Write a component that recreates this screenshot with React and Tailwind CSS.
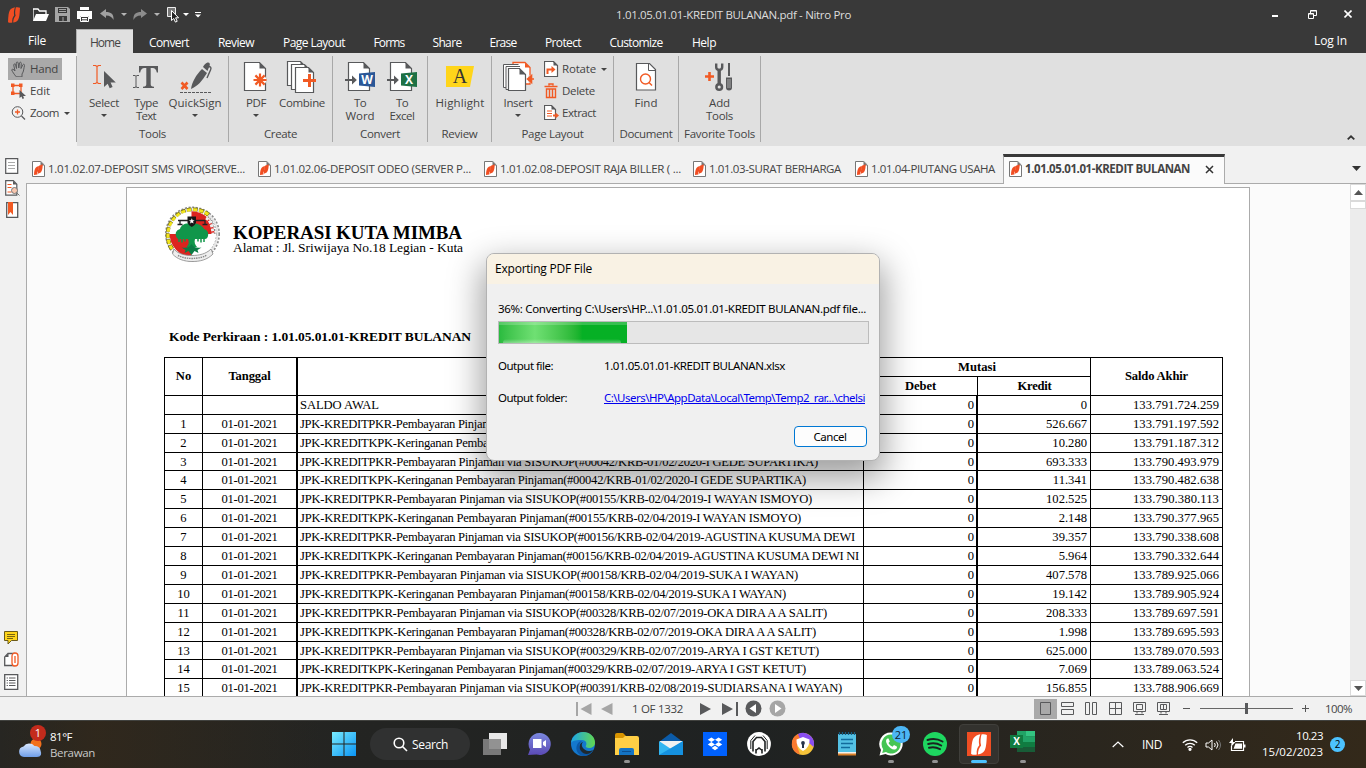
import { useLayoutEffect, useRef, useState } from "react";

/* Single line of text whose tracking is tuned so that it fills `w` pixels. */
function Fit({ w, className = "", children }) {
  const ref = useRef(null);
  const [spacing, setSpacing] = useState(0);
  useLayoutEffect(() => {
    const natural = ref.current.getBoundingClientRect().width;
    setSpacing((w - natural) / String(children).length);
  }, [w, children]);
  return (
    <span ref={ref} className={"inline-block whitespace-pre " + className} style={{ letterSpacing: spacing }}>
      {children}
    </span>
  );
}

const Caret = ({ className = "" }) => (
  <svg className={"h-[3px] w-[6px] " + className} viewBox="0 0 6 3" fill="currentColor"><path d="M0 0h6L3 3z" /></svg>
);

const NitroMark = ({ className }) => (
  <svg viewBox="0 0 12 16" className={className} fill="currentColor">
    <path d="M0 15.200C.3 9 .6 5 2 3 3 1.600 5 .6 7 .2 6 3 5.600 5.500 6.200 8.600 4.800 10 3.900 12.500 4.300 15.600 3 16 1.200 15.900 0 15.200z" />
    <path d="M12 .8C11.700 7 11.400 11 10 13 9 14.400 7.500 15.200 5.200 15.600 5.200 13 6 10.600 7.600 8.800 6.800 6 7.200 3 7.900.3 9.400 0 11 .1 12 .8z" />
  </svg>
);

const PdfIcon = () => (
  <svg className="h-4 w-[13px] shrink-0" viewBox="0 0 13 16" fill="none">
    <path d="M.5.5h8.300l3.700 3.700v11.300H.5z" fill="#fff" stroke="#777" />
    <path d="M8.500.5v4h4z" fill="#777" />
    <path d="M2 14c.1-4 .6-7 2.800-8.300L6.800 5v4.500L5.400 11v2.500zM10.700 3.300c0 3-.4 6.700-2 8.200L5.900 12.800V10l1-1V4.800z" fill="#f04e23" />
  </svg>
);

const S = "#58595b";
const O = "#f15a24";

const Sheet = ({ x = 0, y = 0, w = 21, h = 28, c = S, fill = "#fff", fold = 6 }) => (
  <g transform={`translate(${x} ${y})`}>
    <path d={`M.5.5h${w - fold}l${fold} ${fold}v${h - fold}h-${w}z`} fill={fill} stroke={c} strokeWidth="1.2" />
    <path d={`M${w - fold + 0.5}.5v${fold}h${fold}z`} fill={c} />
  </g>
);

const Ribbon = {
  select: (
    <svg width="34" height="36" viewBox="0 0 34 36" fill="none">
      <path d="M6 5.500h2.500l1.500 1 1.500-1H14M10 6.500v16M6 23.500h2.500l1.500-1 1.500 1H14" stroke={O} strokeWidth="1.200" />
      <path d="M17 11v16l3.700-3.300 2 4.500 2.900-1.300-2-4.400H28.800z" fill={S} />
    </svg>
  ),
  type: (
    <svg width="34" height="36" viewBox="0 0 34 36" fill="none">
      <path d="M4 15.500h2l1 .8 1-.8h2M7 16.300v11M4 27.500h2l1-.8 1 .8h2" stroke={S} />
      <path d="M10 6h19v6.500h-1.200c-.6-3-1.800-4.500-4.300-4.500h-1.800v16c0 2 .7 2.500 3.300 2.700V28H14v-1.300c2.600-.2 3.300-.7 3.300-2.700V8h-1.800c-2.500 0-3.700 1.500-4.300 4.500H10z" fill={S} />
    </svg>
  ),
  sign: (
    <svg width="36" height="36" viewBox="0 0 36 36" fill="none">
      <path d="M14 29C15 22 19 15 25 9l5 4c-5 8-9 13-16 16zM26 7c1-2 2.500-4 4.500-4.500S33.500 4 32.500 6L30.500 11z" fill={S} />
      <path d="M31 6.500c3 0 3.500 1 2.500 3.500l-3.500 8" stroke={S} strokeWidth="1.400" />
      <path d="m4.500 22.500 6 6.500m0-6.500-6 6.500" stroke={O} strokeWidth="2.600" />
      <path d="M3 32.500h32" stroke={S} strokeDasharray="3 1" />
    </svg>
  ),
  pdf: (
    <svg width="32" height="36" viewBox="0 0 32 36" fill="none">
      <Sheet x={4} y={2} />
      <path d="M19 13v14M12 20h14M14.200 15.200l9.600 9.600m0-9.600-9.600 9.600" stroke="#fff" strokeWidth="5" />
      <path d="M20 13.500v13M13.500 20h13M15.400 15.400l9.200 9.200m0-9.200-9.200 9.200" stroke={O} strokeWidth="2.200" />
    </svg>
  ),
  combine: (
    <svg width="34" height="36" viewBox="0 0 34 36" fill="none">
      <Sheet x={2} y={1} w={18} h={24} fold={5} /><Sheet x={6} y={4} w={18} h={25} fold={5} /><Sheet x={10} y={7} w={18} h={25} fold={5} />
      <path d="M24.500 14v13M18 20.500h13" stroke={O} strokeWidth="3" />
    </svg>
  ),
  find: (
    <svg width="34" height="36" viewBox="0 0 34 36" fill="none">
      <path d="M7.500 3.500h13l6 6V30h-19z" fill="#fff" stroke={S} strokeWidth="1.200" /><path d="M19.500 3.500v7h7" stroke={S} />
      <circle cx="16.500" cy="19" r="5" stroke={O} strokeWidth="1.400" /><path d="m20 22.500 3 3" stroke={O} strokeWidth="1.400" />
    </svg>
  ),
  insert: (
    <svg width="34" height="36" viewBox="0 0 34 36" fill="none">
      <path d="M12 5V2.500h12l5 5V24h-5" fill="#fff" stroke={O} strokeWidth="1.300" /><path d="M24 2.500v5h5z" fill={O} />
      <path d="M5.500 27.500h-3v-23h15" stroke={S} fill="#fff" /><path d="M8 29.500H5v-23h14" stroke={S} fill="#fff" />
      <Sheet x={7} y={8} w={17} h={22} fold={6} />
      <path d="M27 19h7" stroke="#e0e0e0" strokeWidth="7" /><path d="M27 19h6m-2.500-3.500L26.500 19l4 3.500z" stroke={O} strokeWidth="1.600" fill={O} />
    </svg>
  ),
  highlight: (
    <svg width="30" height="36" viewBox="0 0 30 36"><path d="M1 6h28l-4 21H1z" fill="#ffd51a" /></svg>
  ),
  tools: (
    <svg width="34" height="36" viewBox="0 0 34 36" fill="none">
      <path d="M6.500 12v9M2 16.500h9" stroke={O} strokeWidth="2.600" />
      <path d="M13.200 3.500v3.700q0 2.300 3 2.800 3-.5 3-2.800V3.500" stroke={S} strokeWidth="2.400" /><path d="M16.200 9v15" stroke={S} strokeWidth="3.400" />
      <circle cx="16.200" cy="27" r="2.800" stroke={S} strokeWidth="2.500" />
      <path d="M25 3h2v13h-2z" fill={S} /><path d="M23 17.500h6v10q0 3-3 3t-3-3z" fill={S} /><path d="M25 19v9M27 19v9" stroke="#e0e0e0" strokeWidth=".6" />
    </svg>
  ),
};

function OfficeIcon({ letter, color }) {
  return (
    <span className="relative block h-9 w-[34px]">
      <svg width="34" height="36" viewBox="0 0 34 36" fill="none">
        <Sheet x={5} y={2} />
        <path d="M2 20h8.500" stroke={S} strokeWidth="2" /><path d="M9 15.500 13.800 20 9 24.500z" fill={S} />
        <path d="M16 13.500 32 12v15l-16-1.500z" fill={color} />
      </svg>
      <span className="absolute left-[16px] top-[13px] w-4 text-center text-[12px] font-bold leading-[13px] text-white">{letter}</span>
    </span>
  );
}

function Big({ icon, lines, w, caret, lw }) {
  return (
    <div className="flex shrink-0 flex-col items-center" style={{ width: w }}>
      <div className="relative flex h-9 justify-center">{icon}</div>
      <div className="flex flex-col items-center leading-[13px]">
        {lines.map((l, i) => <Fit key={l} w={lw[i]}>{l}</Fit>)}
      </div>
      {caret && <Caret className="mt-[5px]" />}
    </div>
  );
}

function Group({ label, lw, className, children }) {
  return (
    <div className={"flex h-[86px] flex-col items-center border-r border-[#a8a8a8] " + className}>
      <div className="flex h-[71px] w-full pt-1">{children}</div>
      <Fit w={lw} className="leading-[14px]">{label}</Fit>
    </div>
  );
}

const menu = [
  ["Convert", "w-[72px]", 40], ["Review", "w-[62px]", 36], ["Page Layout", "w-[94px]", 62], ["Forms", "w-[56px]", 31],
  ["Share", "w-[60px]", 29], ["Erase", "w-[52px]", 27], ["Protect", "w-[68px]", 36], ["Customize", "w-[78px]", 53], ["Help", "w-[58px]", 24],
];

const docTabs = [
  ["1.01.02.07-DEPOSIT SMS VIRO(SERVE...", "w-[226px]", 197],
  ["1.01.02.06-DEPOSIT ODEO (SERVER P...", "w-[226px]", 197],
  ["1.01.02.08-DEPOSIT RAJA BILLER ( ...", "w-[209px]", 181],
  ["1.01.03-SURAT BERHARGA", "w-[162px]", 132],
  ["1.01.04-PIUTANG USAHA", "w-[154px]", 124],
];

const D = "01-01-2021";
const rows = [
  ["", "", "SALDO AWAL", "0", "0", "133.791.724.259"],
  ["1", D, "JPK-KREDITPKR-Pembayaran Pinjaman via SISUKOP(#00041/KRB-01/02/2020-I MADE SUARTA)", "0", "526.667", "133.791.197.592"],
  ["2", D, "JPK-KREDITKPK-Keringanan Pembayaran Pinjaman(#00041/KRB-01/02/2020-I MADE SUARTA)", "0", "10.280", "133.791.187.312"],
  ["3", D, "JPK-KREDITPKR-Pembayaran Pinjaman via SISUKOP(#00042/KRB-01/02/2020-I GEDE SUPARTIKA)", "0", "693.333", "133.790.493.979"],
  ["4", D, "JPK-KREDITKPK-Keringanan Pembayaran Pinjaman(#00042/KRB-01/02/2020-I GEDE SUPARTIKA)", "0", "11.341", "133.790.482.638"],
  ["5", D, "JPK-KREDITPKR-Pembayaran Pinjaman via SISUKOP(#00155/KRB-02/04/2019-I WAYAN ISMOYO)", "0", "102.525", "133.790.380.113"],
  ["6", D, "JPK-KREDITKPK-Keringanan Pembayaran Pinjaman(#00155/KRB-02/04/2019-I WAYAN ISMOYO)", "0", "2.148", "133.790.377.965"],
  ["7", D, "JPK-KREDITPKR-Pembayaran Pinjaman via SISUKOP(#00156/KRB-02/04/2019-AGUSTINA KUSUMA DEWI", "0", "39.357", "133.790.338.608"],
  ["8", D, "JPK-KREDITKPK-Keringanan Pembayaran Pinjaman(#00156/KRB-02/04/2019-AGUSTINA KUSUMA DEWI NI", "0", "5.964", "133.790.332.644"],
  ["9", D, "JPK-KREDITPKR-Pembayaran Pinjaman via SISUKOP(#00158/KRB-02/04/2019-SUKA I WAYAN)", "0", "407.578", "133.789.925.066"],
  ["10", D, "JPK-KREDITKPK-Keringanan Pembayaran Pinjaman(#00158/KRB-02/04/2019-SUKA I WAYAN)", "0", "19.142", "133.789.905.924"],
  ["11", D, "JPK-KREDITPKR-Pembayaran Pinjaman via SISUKOP(#00328/KRB-02/07/2019-OKA DIRA A A SALIT)", "0", "208.333", "133.789.697.591"],
  ["12", D, "JPK-KREDITKPK-Keringanan Pembayaran Pinjaman(#00328/KRB-02/07/2019-OKA DIRA A A SALIT)", "0", "1.998", "133.789.695.593"],
  ["13", D, "JPK-KREDITPKR-Pembayaran Pinjaman via SISUKOP(#00329/KRB-02/07/2019-ARYA I GST KETUT)", "0", "625.000", "133.789.070.593"],
  ["14", D, "JPK-KREDITKPK-Keringanan Pembayaran Pinjaman(#00329/KRB-02/07/2019-ARYA I GST KETUT)", "0", "7.069", "133.789.063.524"],
  ["15", D, "JPK-KREDITPKR-Pembayaran Pinjaman via SISUKOP(#00391/KRB-02/08/2019-SUDIARSANA I WAYAN)", "0", "156.855", "133.788.906.669"],
];
const rowWidths = [79, 500, 490, 518, 506, 512, 501, 555, 559, 498, 486, 527, 516, 519, 506, 542];

const CoopLogo = () => (
  <svg className="mt-px" width="60" height="58" viewBox="0 0 60 58" fill="none">
    <circle cx="28.500" cy="28" r="25.500" stroke="#8d8d8d" strokeWidth="4" strokeDasharray="2 1.500" />
    <circle cx="28.500" cy="28" r="25" stroke="#e6e6e6" strokeWidth="2" />
    <path d="M8 43A25.500 25.500 0 0 1 45 9" stroke="#756d12" strokeWidth="4.500" strokeDasharray="4.500 1.500" />
    <path d="M8 43A25.500 25.500 0 0 1 45 9" stroke="#f2e51c" strokeWidth="3" strokeDasharray="4 2" />
    <circle cx="28.500" cy="28" r="22.800" fill="#fff" />
    <path d="M27.500 5.200A22.800 22.800 0 0 1 50.500 28h-23zM27.500 50.800A22.800 22.800 0 0 1 5.700 28h21.800z" fill="#dc241f" />
    <path d="M12 30c-1-4 1-6 4-7 1-4 5-6 11-6s11 2 13 6c3 1 5 3 4 7-.5 2-1.500 3-3 3H31c-1 3 0 6 2 8H22.500c2-2 3-5 1.500-8H15c-1.500 0-2.500-1-3-3z" fill="#10964a" />
    <path d="M15 32v4M18 32v4.500M21 32v3.500M34 32v3.500M37 32v4.500M40 32v4" stroke="#10964a" strokeWidth="1.500" />
    <path d="M27.500 38c2 4 6 4 10 3.500l-4 2.500 1 3-4-2-3 4-3-4-4 2 1-3-4-2.500c4 .5 8 .5 10-3.500z" fill="#0c7d46" />
    <path d="M14 14.500h27M16 14v4M41 14v4M13.500 18.500h5M38.500 18.500h5" stroke="#222" strokeWidth="1.300" />
    <path d="M23.500 10.500h8.500v6q-1 3.500-4.200 4.500-3.300-1-4.300-4.500z" fill="#161616" />
    <path d="m27.800 12.300.8 1.900 2 .1-1.600 1.300.6 2-1.800-1.100-1.800 1.100.6-2-1.600-1.300 2-.1z" fill="#fff" />
    <path d="M42 12q6 3 7 16" stroke="#eee" strokeWidth="3" strokeDasharray="3 1.200" />
    <path d="M44 11q6 4 7 17" stroke="#777" strokeDasharray="2 1.500" />
    <path d="M10 43c4 5 11 6.500 18 6.500s14-1.500 19-6.500l2 5c-6 6-13 7.500-21 7.500S13 53 8.500 48z" fill="#eee" stroke="#888" strokeWidth=".8" />
    <path d="M14 49.500c8 4 21 4 29-.5" stroke="#888" strokeDasharray="1.500 .8" strokeWidth="1.400" />
  </svg>
);

function Ledger() {
  const grid = "grid grid-cols-[38px_95px_566px_114px_113px_132px]";
  const cell = "border-r border-black overflow-hidden";
  return (
    <div className="mt-[12px] w-[1059px] border-l border-t border-black text-[12.600px] leading-[18px]">
      <div className={grid + " h-[36.800px] font-bold"}>
        <div className={cell + " flex items-center justify-center"}>No</div>
        <div className={cell + " flex items-center justify-center border-r-2"}><Fit w={42}>Tanggal</Fit></div>
        <div className={cell + " flex items-center justify-center"}>Keterangan</div>
        <div className={cell + " col-span-2 flex flex-col"}>
          <div className="h-[18px] text-center">Mutasi</div>
          <div className="grid h-[19px] grid-cols-[114px_113px] border-t border-black text-center">
            <div className="border-r border-black"><Fit w={31}>Debet</Fit></div><div><Fit w={34}>Kredit</Fit></div>
          </div>
        </div>
        <div className={cell + " flex items-center justify-center"}><Fit w={63}>Saldo Akhir</Fit></div>
      </div>
      {rows.map((r, i) => (
        <div key={i} className={grid + " h-[18.910px] border-t border-black text-black"}>
          <div className={cell + " text-center"}>{r[0]}</div>
          <div className={cell + " border-r-2 text-center"}>{r[1] && <Fit w={56}>{r[1]}</Fit>}</div>
          <div className={cell + " pl-[2px]"}><Fit w={rowWidths[i]}>{r[2]}</Fit></div>
          <div className={cell + " border-r-2 pr-[2px] text-right"}>{r[3]}</div>
          <div className={cell + " pr-[3px] text-right"}>{r[4]}</div>
          <div className={cell + " pr-[3px] text-right"}><Fit w={86}>{r[5]}</Fit></div>
        </div>
      ))}
    </div>
  );
}

function ExportDialog() {
  return (
    <div className="absolute left-[486px] top-[253px] h-[208px] w-[394px] overflow-hidden rounded-lg border border-[#b2b2b2] bg-[#f0f0f0] text-[11.500px] text-black shadow-[0_14px_34px_4px_rgba(0,0,0,0.38)]">
      <div className="flex h-[30px] items-center bg-[#f9f2e4] pl-2 font-['Open_Sans',sans-serif] text-[12px]"><Fit w={97}>Exporting PDF File</Fit></div>
      <div className="px-[11px] pt-[17px] font-['Noto_Sans',sans-serif]">
        <div className="h-[20px] leading-4"><Fit w={368}>36%: Converting C:\Users\HP...\1.01.05.01.01-KREDIT BULANAN.pdf file...</Fit></div>
        <div className="h-[23px] w-[371px] border border-[#bcbcbc] bg-[#e6e6e6]">
          <div className="relative h-full w-32 bg-linear-to-r from-[#29bb3f] via-[#6fe073] via-28% to-[#06b025] to-65%">
            <div className="absolute inset-x-0 top-0 h-[3px] bg-white/20" />
            <div className="absolute bottom-0 left-1 h-1 w-[118px] rounded-t-lg bg-linear-to-t from-white/35 to-transparent" />
          </div>
        </div>
        <div className="mt-[14px] flex h-4 items-center"><div className="w-[106px]"><Fit w={55}>Output file:</Fit></div><Fit w={181}>1.01.05.01.01-KREDIT BULANAN.xlsx</Fit></div>
        <div className="mt-4 flex h-4 items-center"><div className="w-[106px]"><Fit w={69}>Output folder:</Fit></div><Fit w={261} className="text-[#0000ee] underline">C:\Users\HP\AppData\Local\Temp\Temp2_rar...\chelsi</Fit></div>
        <div className="mt-[20px] flex justify-end pr-[1px]"><div className="flex h-[21px] w-[73px] items-center justify-center rounded-[4px] border border-[#0078d4] bg-[#fdfdfd] pr-px"><Fit w={33}>Cancel</Fit></div></div>
      </div>
    </div>
  );
}

const TitleIcons = () => (
  <div className="flex h-[29px] items-center">
    <NitroMark className="ml-2 h-4 w-3 text-[#f04e23]" />
    <svg className="ml-[13px]" width="16" height="14" viewBox="0 0 16 14"><path d="M0 13V1h5l1.500 2H13v3" fill="none" stroke="#fff" strokeWidth="1.300" /><path d="M3 6h13l-3 7H0z" fill="#fff" /></svg>
    <svg className="ml-[6px]" width="15" height="15" viewBox="0 0 15 15"><path d="M0 0h13l2 2v13H0z" fill="#a5a5a5" /><path d="M3 1h9v5H3zM4 9h8v5H4z" fill="#393939" /><path d="M4 2.500h7M4 4.500h7M8 10v4" stroke="#a5a5a5" /></svg>
    <svg className="ml-[7px]" width="15" height="16" viewBox="0 0 15 16"><path d="M3 0h9v3H3zM0 4h15v8h-3V9H3v3H0z" fill="#fff" /><path d="M3.500 9.500h8v5h-8z" fill="#393939" stroke="#fff" /><path d="M5 11.500h5M5 13.200h5" stroke="#fff" /></svg>
    <svg className="ml-[8px]" width="14" height="12" viewBox="0 0 14 12"><path d="M0 4.500 6 0v3c5 0 8 2 7.500 8C12 8 10 6.500 6 6.500V9z" fill="#a0a0a0" /></svg>
    <Caret className="ml-[7px] text-[#b5b5b5]" />
    <svg className="ml-[6px] -scale-x-100" width="14" height="12" viewBox="0 0 14 12"><path d="M0 4.500 6 0v3c5 0 8 2 7.500 8C12 8 10 6.500 6 6.500V9z" fill="#8c8c8c" /></svg>
    <Caret className="ml-[7px] text-[#b5b5b5]" />
    <svg className="ml-[7px]" width="13" height="17" viewBox="0 0 13 17"><path d="M.5 1.500h8v9h-8z" fill="#777" stroke="#eee" /><path d="M4.500 4.500v10l2.300-2 1.600 3.600 1.800-.8-1.600-3.500h3z" fill="#222" stroke="#fff" /></svg>
    <Caret className="ml-[3px] text-white" />
    <svg className="ml-[6px]" width="6" height="6" viewBox="0 0 6 6" fill="#fff"><path d="M0 0h6v1H0zM0 2.500h6L3 5.500z" /></svg>
  </div>
);

const SideIcon = ({ children, className }) => <svg width="15" height="16" viewBox="0 0 15 16" fill="none" className={className}>{children}</svg>;

function Cell({ children, dot, active }) {
  return (
    <div className="flex h-[47px] w-11 shrink-0 justify-center">
      <div className={"relative mt-[3px] flex h-10 w-10 justify-center pt-2 " + (active ? "rounded-[4px] border border-[#403f3b] bg-[#33322e] !pt-[7px]" : "")}>
        {children}
        {dot && <span className="absolute bottom-[1px] h-[3px] w-[6px] rounded-full bg-[#929292]" />}
        {active && <span className="absolute bottom-0 h-[3px] w-4 rounded-full bg-[#4cc2ff]" />}
      </div>
    </div>
  );
}

const I24 = ({ children }) => <svg width="24" height="24" viewBox="0 0 24 24" fill="none">{children}</svg>;

function Taskbar() {
  return (
    <div className="flex h-12 items-start border-t border-[#41423f] bg-linear-to-r from-[#272622] via-[#1f2222] via-55% to-[#33291a] text-white">
      <div className="flex h-full w-[322px] items-center bg-linear-to-r from-transparent via-[#34291a]/70 via-30% to-transparent pl-[18px]">
        <span className="relative flex h-8 w-[28px] items-start pt-[9px]">
          <svg width="26" height="20" viewBox="0 0 26 20"><defs><linearGradient id="cl" x2="0" y2="1"><stop stopColor="#d8e8ff" /><stop offset="1" stopColor="#6f9ee8" /></linearGradient></defs><circle cx="18" cy="6" r="5.500" fill="#f2701c" /><path d="M6 19a5.300 5.300 0 0 1-.5-10.500A7 7 0 0 1 16.500 8q5.500 0 6 4.500Q25 19 19 19z" fill="url(#cl)" /></svg>
          <span className="absolute left-3 -top-1 h-4 w-4 rounded-full bg-[#c42b1c] text-center text-[11px] leading-4">1</span>
        </span>
        <div className="ml-[4px] flex flex-col items-start text-[11.500px] leading-4"><Fit w={22}>81°F</Fit><Fit w={45} className="text-[#c8c8c8]">Berawan</Fit></div>
      </div>
      <Cell><svg width="24" height="24" viewBox="0 0 24 24"><defs><linearGradient id="win" x2="1" y2="1"><stop stopColor="#78ecff" /><stop offset="1" stopColor="#0a94f5" /></linearGradient></defs><path d="M0 0h11.500v11.500H0zM12.500 0H24v11.500H12.500zM0 12.500h11.500V24H0zM12.500 12.500H24V24H12.500z" fill="url(#win)" /></svg></Cell>
      <div className="ml-1 mr-[3px] mt-[7px] flex h-8 w-[100px] items-center rounded-full bg-[#303131] pl-[23px]">
        <svg width="15" height="15" viewBox="0 0 15 15" fill="none" stroke="#fff" strokeWidth="1.600"><circle cx="6" cy="6" r="4.800" /><path d="m9.500 9.500 4.500 4.500" /></svg>
        <Fit w={36} className="ml-[4px] pt-px text-[12px]">Search</Fit>
      </div>
      <Cell><I24><path d="M6 1h18v16H6z" fill="#e8e8e8" /><path d="M0 7h18v16H0z" fill="#858585" fillOpacity=".88" /></I24></Cell>
      <Cell><I24><defs><linearGradient id="ch" x2="0" y2="1"><stop stopColor="#7b88df" /><stop offset="1" stopColor="#5b4ab5" /></linearGradient></defs><path d="M12.500 1a11 11 0 1 1-3 21.500L1 23l2-5.500A11 11 0 0 1 12.500 1z" fill="url(#ch)" /><path d="M6 7h8.500v9H6zM16 10l3-2v7l-3-2z" fill="#fff" /></I24></Cell>
      <Cell><I24><defs><linearGradient id="e1" x2="1" y2="0"><stop stopColor="#1ca4e8" /><stop offset="1" stopColor="#62d84f" /></linearGradient></defs><circle cx="12" cy="12" r="12" fill="#1478cc" /><path d="M0 11C1 3.500 7 0 12 0c7 0 12 5 12 10.500 0 4-3 5.500-6 5.500-2.500 0-4-1-3-2.500 1-1.500.5-5.500-4-5.500C6 8 2 8 0 11z" fill="url(#e1)" /><path d="M11 9c-4 3-3.500 9 2 11.500 4 1.500 8 .5 9.500-2.500C20 22.500 16 24 12 24 7 23 4 18 6 13c1-2.500 3-4 5-4z" fill="#0b58a8" /><path d="M12 10c-3 3 0 8 5 9 2 .300 4-.5 5-1-3 5-9 5-12 1-2.500-3.500-1.500-8 2-9z" fill="#1f2930" /></I24></Cell>
      <Cell dot><I24><path d="M0 3q0-2 2-2h6l3 3v5H0z" fill="#d89400" /><path d="M0 6h8l2-2h12q2 0 2 2v17H0z" fill="#ffcf45" /><path d="M4 23v-5q0-2 2-2h11q2 0 2 2v5z" fill="#1474c4" /><path d="M7 19.500h9" stroke="#0c4f91" /></I24></Cell>
      <Cell><I24><path d="M0 10 12 1l12 9z" fill="#0b5ba8" /><path d="M1 9h22v10H1z" fill="#f1f1f1" /><path d="M0 9v14h24V9l-12 8z" fill="#32b5f0" /><path d="M0 23 24 9v14z" fill="#1591df" /></I24></Cell>
      <Cell><I24><path d="M0 0h24v24H0z" fill="#0061fe" /><path d="m8.400 5.500 3.600 2.300-3.600 2.300-3.600-2.300zM15.600 5.500l3.600 2.300-3.600 2.300L12 7.800zM8.400 10.100l3.600 2.300-3.600 2.300-3.600-2.300zM15.600 10.100l3.600 2.300-3.600 2.300-3.600-2.300zM12 13.800l3.400 2.200-3.400 2.200L8.600 16z" fill="#fff" /></I24></Cell>
      <Cell><I24><circle cx="12" cy="12" r="11.900" fill="#fff" /><path d="M6 19.500V9.500l3.500-4h5l3.500 4v10M9 21.500V17M15 21.500V17" stroke="#202323" strokeWidth="1.600" /><path d="M3.800 17V8.500L8 3.500M20.200 17V8.500L16 3.500" stroke="#202323" strokeWidth="1" /><path d="m9 19 3-2 3 2v-1.500L12 15l-3 2.500z" fill="#202323" /></I24></Cell>
      <Cell><I24><circle cx="12" cy="12" r="11" fill="#f5c339" /><path d="M7 2A11 11 0 0 1 22.500 15L17 10 6.500 6z" fill="#8a4df0" /><path d="M7 2A11 11 0 0 0 9 22.600L6 14l3-7z" fill="#fa7a2f" /><path d="m12 5 6.500 2.500q.5 8-6.500 11.500Q5 15.500 5.500 7.500z" fill="#fff" /><circle cx="12" cy="11" r="1.900" fill="#27344a" /><path d="M11 12h2v4h-2z" fill="#27344a" /></I24></Cell>
      <Cell><I24><path d="M3 2h18v19H3z" fill="#54c1e4" /><path d="M3 21h18v2.500H3z" fill="#d9802a" /><path d="M3 20h18v1.500H3z" fill="#f4f1ea" /><path d="M6 7.500h12M6 11.500h12M6 15.500h9" stroke="#126b9c" strokeWidth="1.700" /><path d="M4.500 0v3M7.500 0v3M10.500 0v3M13.500 0v3M16.500 0v3M19.500 0v3" stroke="#155d83" strokeWidth="1.300" /></I24></Cell>
      <Cell dot><I24><path d="M12 .5A11.500 11.500 0 1 1 6.500 22L.5 23.500 2 18A11.500 11.500 0 0 1 12 .5z" fill="#fff" /><path d="M12 2.500A9.500 9.500 0 1 1 7 20l-3.800 1 1-3.800A9.500 9.500 0 0 1 12 2.500z" fill="#45c554" /><path d="M8.500 6.500c-2 1-2 3.500 0 6.500 2.500 3.500 6 5.500 8.500 4 1-.700 1.200-2 .8-2.500L15 13l-1.500 1.700c-1.500-.500-3.500-2.300-4-3.700L10.800 9.500 9.500 6.500z" fill="#fff" /></I24><span className="absolute left-[21px] top-[2px] h-[17px] w-[18px] rounded-full bg-[#4cb6f5] text-center text-[11px] leading-[17px] text-[#10222e]">21</span></Cell>
      <Cell dot><I24><circle cx="12" cy="12" r="12" fill="#1ed760" /><path d="M4.500 8c5-1.500 10.500-1 15 1.500M5.200 12c4.500-1.200 9-.8 13 1.500M6 15.800c4-1 7.500-.5 11 1.300" stroke="#1a2420" strokeWidth="2" strokeLinecap="round" /></I24></Cell>
      <Cell active><span className="flex h-6 w-6 items-center justify-center bg-[#f04e23]"><NitroMark className="h-[21px] w-[16px] text-white" /></span></Cell>
      <Cell dot><svg width="26" height="24" viewBox="0 0 26 24" className="-mt-[2px]"><path d="M7 1h18v21H7z" fill="#185c37" /><path d="M7 1h9v11H7z" fill="#21a366" /><path d="M16 1h9v5.500h-9z" fill="#33c481" /><path d="M16 6.500h9V12h-9z" fill="#21a366" /><path d="M7 12h9v5H7z" fill="#107c41" /><path d="M16 12h9v5h-9z" fill="#107c41" /><path d="M0 5h13v13H0z" fill="#107c41" /></svg><span className="absolute left-[7px] top-[11px] w-[13px] text-center text-[10px] font-bold leading-[13px]">X</span></Cell>
      <div className="flex h-[47px] flex-1 items-center pl-[67px]">
        <svg width="12" height="7" viewBox="0 0 12 7" fill="none" stroke="#fff" strokeWidth="1.200"><path d="m.7 6 5.300-5 5.300 5" /></svg>
        <Fit w={20} className="ml-[18px] text-[12px]">IND</Fit>
        <svg className="ml-5" width="16" height="13" viewBox="0 0 16 13" fill="none" stroke="#fff" strokeWidth="1.300"><path d="M.8 4.800a10.300 10.300 0 0 1 14.400 0M3.200 7.300a6.800 6.800 0 0 1 9.600 0M5.500 9.500a3.500 3.500 0 0 1 5 0" /><circle cx="8" cy="11.300" r="1" fill="#fff" /></svg>
        <svg className="ml-[7px]" width="17" height="14" viewBox="0 0 17 14" fill="none" stroke="#fff"><path d="M1 5v4h2.500L7 12V2L3.500 5zM9.500 5q1.500 2 0 4" /><path d="M11.500 3.500q3 3.500 0 7" /><path d="M13.500 2q4 5 0 10" stroke="#777" /></svg>
        <svg className="ml-[7px]" width="18" height="14" viewBox="0 0 18 14" fill="none"><path d="M6 3.500h8.500v9H2.500V8" stroke="#fff" strokeWidth="1.200" /><path d="M6.500 5.500H13v5.200H4.500z" fill="#fff" /><path d="M15 6.500h1.500v3H15z" fill="#fff" /><path d="M4 0 0 5h2.500L2 9l4.500-5H4z" fill="#fff" /></svg>
        <div className="ml-[12px] flex w-[64px] flex-col items-end pb-px text-[11.500px] leading-4"><Fit w={27}>10.23</Fit><Fit w={61}>15/02/2023</Fit></div>
        <span className="ml-[7px] h-[15px] w-[15px] rounded-full bg-[#4cc2ff] text-center text-[10px] leading-[15px] text-black">2</span>
      </div>
    </div>
  );
}

function StatusBar() {
  const g = "#58595b";
  return (
    <div className="flex h-[24px] items-center border-t border-[#ababab] bg-[#f1f1f1] text-[#444]">
      <div className="flex flex-1 items-center pl-[576px]">
        <svg width="17" height="14" viewBox="0 0 17 14" fill="#a6a6a6"><path d="M0 0h2v14H0zM15.500 1v12L4.500 7z" /></svg>
        <svg className="ml-[8px]" width="12" height="14" viewBox="0 0 12 14" fill="#a6a6a6"><path d="M11.500 1v12L0 7z" /></svg>
        <Fit w={51} className="ml-[19px] text-[11.500px]">1 OF 1332</Fit>
        <svg className="ml-4" width="12" height="14" viewBox="0 0 12 14" fill={g}><path d="M1 1v12l11-6z" /></svg>
        <svg className="ml-[10px]" width="17" height="14" viewBox="0 0 17 14" fill={g}><path d="M15 0h2v14h-2zM1 1v12l11-6z" /></svg>
        <svg className="ml-[7px]" width="17" height="17" viewBox="0 0 17 17"><circle cx="8.500" cy="8.500" r="8" fill={g} /><path d="M11 4v9L4.500 8.500z" fill="#fff" /></svg>
        <svg className="ml-[7px]" width="17" height="17" viewBox="0 0 17 17"><circle cx="8.500" cy="8.500" r="8" fill="#a6a6a6" /><path d="M6 4v9l6.500-4.500z" fill="#fff" /></svg>
      </div>
      <div className="flex h-full w-[332px] items-center">
        <div className="flex h-5 w-[23px] items-center justify-center bg-[#a9a9a9]"><svg width="11" height="13" viewBox="0 0 11 13" fill="none" stroke={g}><path d="M.5.5h10v12H.5z" /></svg></div>
        <svg className="ml-1" width="13" height="13" viewBox="0 0 13 13" fill="none" stroke={g}><path d="M.5.500v4h12v-4zM.5 12.500v-5h12v5z" /></svg>
        <svg className="ml-[11px]" width="13" height="13" viewBox="0 0 13 13" fill="none" stroke={g}><path d="M.5.5h4v12h-4zM7.500.5h4v12h-4z" /></svg>
        <svg className="ml-[11px]" width="13" height="13" viewBox="0 0 13 13" fill="none" stroke={g}><path d="M.5.5h12v12H.5zM6.500 0v13M0 6.500h13" /></svg>
        <svg className="ml-[11px]" width="13" height="13" viewBox="0 0 13 13" fill="none" stroke={g}><path d="M.5.5h12v9H.5zM3.500 2.500h6v5h-6zM4 9.500v2M9 9.500v2M2 12.500h9" /></svg>
        <svg className="ml-[11px]" width="13" height="13" viewBox="0 0 13 13" fill="none" stroke={g}><path d="M.5.5h12v9H.5zM3.500 2.500h6v5h-6zM6.500 2.500v5M4 9.500v2M9 9.500v2M2 12.500h9" /></svg>
        <span className="ml-[13px] h-px w-[7px] bg-[#555]" />
        <div className="ml-[10px] flex w-[93px] items-center"><span className="h-px w-[45px] bg-[#666]" /><span className="h-[11px] w-[3px] bg-[#58595b]" /><span className="h-px flex-1 bg-[#666]" /></div>
        <svg className="ml-[9px]" width="8" height="8" viewBox="0 0 8 8" stroke="#555"><path d="M0 3.500h7M3.500 0v7" /></svg>
        <Fit w={27} className="ml-[15px] pt-px text-[11.500px]">100%</Fit>
      </div>
    </div>
  );
}

export default function App() {
  return (
    <div className="relative flex h-[768px] w-[1366px] flex-col overflow-hidden bg-[#f1f1f1] font-['Open_Sans',sans-serif] text-[12px] text-[#444]">
      <header className="h-[53px] shrink-0 bg-[#393939] text-white">
        <div className="flex h-[29px] items-center">
          <div className="w-[616px]"><TitleIcons /></div>
          <Fit w={235} className="text-[11.500px] text-[#ddd]">1.01.05.01.01-KREDIT BULANAN.pdf - Nitro Pro</Fit>
          <div className="flex flex-1 items-center justify-end pb-px pr-[14px]">
            <span className="mt-[3px] h-[2px] w-[6px] bg-white" />
            <svg className="ml-[30px]" width="9" height="9" viewBox="0 0 9 9" fill="none" stroke="#fff"><path d="M.5 3.500h5v5h-5zM2.500 3V.5h6v5H6M.5 4h5M2.500 1h6" /></svg>
            <svg className="ml-[27px]" width="8" height="8" viewBox="0 0 8 8" stroke="#fff" strokeWidth="1.600"><path d="m.5.5 7 7m0-7-7 7" /></svg>
          </div>
        </div>
        <nav className="flex h-6 items-center">
          <div className="w-[76px] pr-[2px] text-center"><Fit w={18}>File</Fit></div>
          <div className="flex h-6 w-[57px] items-center justify-center border-l border-t border-[#b0b0b0] bg-[#e0e0e0] pt-[2px] text-[#444]"><Fit w={30}>Home</Fit></div>
          {menu.map(([t, c, w]) => <div key={t} className={c + " pt-[3px] text-center"}><Fit w={w}>{t}</Fit></div>)}
          <div className="flex-1 pr-[19px] text-right"><Fit w={33}>Log In</Fit></div>
        </nav>
      </header>

      <section className="flex h-[93px] shrink-0 bg-[#e0e0e0] text-[11.500px]">
        <div className="h-full w-[77px] bg-[#f1f1f1] pt-[3px]">
          <div className="h-[86px] border-r border-[#a8a8a8] pl-2 pt-[2px]">
            <div className="flex h-[22px] w-[54px] items-center bg-[#a9a9a9] pl-[3px]">
              <svg width="15" height="16" viewBox="0 0 15 16" fill="none" stroke="#58595b" strokeLinecap="round" strokeLinejoin="round"><path d="M5 15.500C3 13 1.500 11 .7 8.800c.5-1 2-.6 3.300 1.200L2.700 4c0-1.300 1.500-1.500 2 0l.8 3.500L5.200 2c.2-1.300 1.800-1.300 2 0l.6 5L8.500 2c.3-1.200 1.800-1 1.800.3L10 7.500l1.800-3.700c.6-1 2-.6 1.700.7-.8 3-.6 6-2.500 8.500v2.500z" /></svg>
              <Fit w={28} className="ml-1">Hand</Fit>
            </div>
            <div className="flex h-[22px] items-center pl-[3px]">
              <svg width="15" height="16" viewBox="0 0 15 16" fill="none"><path d="M2 2.500h8v8H2z" stroke={O} strokeWidth="1.300" /><path d="M0 .5h3.500V4H0zM8 .5h3.500V4H8zM0 8.500h3.500V12H0z" fill={O} /><path d="M8.500 7v8l2-1.600L11.500 16l1.600-.7-1-2.400h2.900z" fill={S} /></svg>
              <Fit w={20} className="ml-1">Edit</Fit>
            </div>
            <div className="flex h-[22px] items-center pl-[3px]">
              <svg width="15" height="16" viewBox="0 0 15 16" fill="none"><circle cx="6.500" cy="7" r="5.300" stroke={S} /><path d="m10.500 11 3.500 3.500" stroke={S} strokeWidth="1.300" /><path d="M6.500 4.500v5M4 7h5" stroke={O} strokeWidth="1.300" /></svg>
              <Fit w={29} className="ml-1">Zoom</Fit><Caret className="ml-[5px]" />
            </div>
          </div>
        </div>
        <div className="flex flex-1 pt-[3px]">
          <Group label="Tools" lw={27} className="w-[152px]">
            <span className="w-[3px]" />
            <Big w={48} icon={Ribbon.select} lines={["Select"]} lw={[30]} caret />
            <Big w={36} icon={Ribbon.type} lines={["Type", "Text"]} lw={[24, 20]} />
            <Big w={62} icon={Ribbon.sign} lines={["QuickSign"]} lw={[53]} caret />
          </Group>
          <Group label="Create" lw={33} className="w-[104px]">
            <Big w={54} icon={Ribbon.pdf} lines={["PDF"]} lw={[20]} caret />
            <Big w={38} icon={Ribbon.combine} lines={["Combine"]} lw={[46]} />
          </Group>
          <Group label="Convert" lw={40} className="w-[95px]">
            <span className="w-[6px]" />
            <Big w={42} icon={<OfficeIcon letter="W" color="#2b5797" />} lines={["To", "Word"]} lw={[12, 29]} />
            <Big w={42} icon={<OfficeIcon letter="X" color="#1e7145" />} lines={["To", "Excel"]} lw={[12, 25]} />
          </Group>
          <Group label="Review" lw={36} className="w-[64px]">
            <Big w={64} icon={<>{Ribbon.highlight}<span className="absolute top-[6px] font-['Liberation_Serif',serif] text-[20px] leading-[21px] text-[#333]">A</span></>} lines={["Highlight"]} lw={[49]} />
          </Group>
          <Group label="Page Layout" lw={62} className="w-[122px]">
            <Big w={52} icon={Ribbon.insert} lines={["Insert"]} lw={[29]} caret />
            <div className="flex flex-col">
              <div className="-mt-[2px] flex h-[22px] items-center">
                <svg width="15" height="16" viewBox="0 0 15 16" fill="none"><Sheet w={13} h={15} fold={4} /><path d="M3.500 13V8.500H8" stroke={O} strokeWidth="2" /><path d="m7.500 5 4 3.500-4 3.500z" fill={O} /></svg>
                <Fit w={34} className="ml-[3px]">Rotate</Fit><Caret className="ml-[5px]" />
              </div>
              <div className="flex h-[22px] items-center">
                <svg width="15" height="16" viewBox="0 0 15 16" fill="none" stroke={O} strokeWidth="1.400"><path d="M5 2.500V1h4v1.500M.5 3.500h13M2.500 6h9v8.500h-9zM5.500 6v8M8.500 6v8" /></svg>
                <Fit w={33} className="ml-[3px]">Delete</Fit>
              </div>
              <div className="flex h-[22px] items-center">
                <svg width="15" height="16" viewBox="0 0 15 16" fill="none"><Sheet w={11} h={14} fold={4} /><path d="M3 6h5M3 8.500h5M3 11h5" stroke={O} strokeWidth="1.200" /><path d="M9 10.500h3" stroke={O} strokeWidth="2" /><path d="m11.500 7.500 3.500 3-3.500 3z" fill={O} /></svg>
                <Fit w={34} className="ml-[3px]">Extract</Fit>
              </div>
            </div>
          </Group>
          <Group label="Document" lw={53} className="w-[65px]"><Big w={64} icon={Ribbon.find} lines={["Find"]} lw={[23]} /></Group>
          <Group label="Favorite Tools" lw={71} className="w-[82px]"><Big w={81} icon={Ribbon.tools} lines={["Add", "Tools"]} lw={[21, 27]} /></Group>
          <div className="flex flex-1 items-end justify-end pb-[6px] pr-[11px]"><svg width="8" height="5" viewBox="0 0 8 5" fill="none" stroke="#333" strokeWidth="1.800"><path d="m.7 4.300 3.300-3 3.300 3" /></svg></div>
        </div>
      </section>

      <div className="flex min-h-0 flex-1">
        <aside className="flex w-[26px] shrink-0 flex-col pl-[5px] pt-3">
          <SideIcon><path d="M.7.7h12v14.600H.7z" fill="#fff" stroke={S} strokeWidth="1.200" /><path d="M3 4.500h7M3 7.500h7M3 10.500h7" stroke="#aaa" /></SideIcon>
          <SideIcon className="mt-[6px]"><path d="M.7.7h7.600l3.500 3.500v11H.7z" fill="#fff" stroke={S} strokeWidth="1.200" /><path d="M8 .7v3.800h4z" fill={S} /><path d="M2.500 4.500h4M2.500 7.500h4M2.500 12h4" stroke={O} /><circle cx="9.500" cy="10.500" r="3" fill="#f8c6ae" stroke="#777" /><path d="m11.500 12.500 3 3" stroke="#777" /></SideIcon>
          <SideIcon className="mt-[6px]"><path d="M1.700.7h11v14.600h-11z" fill="#fff" stroke={S} strokeWidth="1.300" /><path d="M3 0h5v13l-2.500-3L3 13z" fill={O} /></SideIcon>
          <div className="-ml-px mt-auto flex flex-col gap-[6px] pb-[6px]">
            <SideIcon><path d="M.5 1.500h13v9H7.500L4 14v-3.500H.5z" fill="#ffd51a" stroke="#6b5a1a" /><path d="M3 4.500h8M3 6.500h8M3 8.500h6" stroke="#7a6510" /></SideIcon>
            <SideIcon><path d="M4 1.500h6v12H.7V5z" fill="#fff" stroke={S} strokeWidth="1.300" /><path d="M1 5h3.500V1.500z" fill={S} /><rect x="8" y="1" width="6" height="13" rx="3" fill="#fff" stroke={O} strokeWidth="1.300" /><path d="M11 4v7" stroke={O} strokeWidth="1.300" /></SideIcon>
            <SideIcon><path d="M.7.7h13v14.600H.7z" fill="#fff" stroke={S} strokeWidth="1.300" /><path d="M5 4h6.500M5 6.500h6.500M5 9h6.500M5 11.500h6.500M2.700 4h1.200M2.700 6.500h1.200M2.700 9h1.200M2.700 11.500h1.200" stroke={S} /></SideIcon>
          </div>
        </aside>
        <div className="flex min-w-0 flex-1 flex-col">
          <div className="flex h-[38px] shrink-0 items-end">
            {docTabs.map(([t, c, w]) => (
              <div key={t} className={c + " flex h-[30px] shrink-0 items-center border-b border-[#ababab] pl-[6px]"}><PdfIcon /><Fit w={w} className="ml-[3px] text-[11.500px]">{t}</Fit></div>
            ))}
            <div className="flex h-[30px] w-[222px] items-center border-x border-t-[3px] border-x-[#ababab] border-t-[#393939] bg-[#fbfbfb] pb-[3px] pl-[5px]">
              <PdfIcon /><Fit w={165} className="ml-[3px] text-[11.500px] font-bold">1.01.05.01.01-KREDIT BULANAN</Fit>
              <svg className="ml-[15px]" width="9" height="9" viewBox="0 0 9 9" stroke="#333" strokeWidth="1.500"><path d="m1 1 7 7m0-7-7 7" /></svg>
            </div>
            <div className="flex h-[30px] flex-1 items-center justify-end border-b border-[#ababab] pr-[5px]"><svg width="9" height="5" viewBox="0 0 9 5" fill="#333"><path d="M0 0h9L4.500 5z" /></svg></div>
          </div>
          <div className="flex min-h-0 flex-1 border-l border-[#ababab] bg-[#fbfbfb]">
            <div className="min-w-0 flex-1 overflow-hidden pl-[99px] pt-[3px]">
              <div className="h-[600px] w-[1124px] border border-[#ababab] bg-white pl-[37px] pt-[17px] font-['Liberation_Serif',serif] text-black">
                <div className="flex h-[58px]">
                  <CoopLogo />
                  <div className="ml-[9px] flex flex-col items-start pt-[19px]">
                    <Fit w={229} className="text-[19px] font-bold leading-[18px]">KOPERASI KUTA MIMBA</Fit>
                    <Fit w={230} className="-mt-px text-[13.500px] leading-[14px]">Alamat : Jl. Sriwijaya No.18 Legian - Kuta</Fit>
                  </div>
                </div>
                <div className="mt-[66px] pl-[5px] text-[13.500px] font-bold leading-[16px]"><Fit w={302}>Kode Perkiraan : 1.01.05.01.01-KREDIT BULANAN</Fit></div>
                <Ledger />
              </div>
            </div>
            <div className="flex w-4 shrink-0 flex-col bg-[#ececec] text-[#555]">
              <div className="flex h-[17px] items-center justify-center border border-[#dadada] bg-white"><svg width="9" height="5" viewBox="0 0 9 5" fill="#555"><path d="M0 5h9L4.500 0z" /></svg></div>
              <div className="h-2 border border-[#dadada] bg-white" />
              <div className="mt-auto flex h-4 items-center justify-center border border-[#dadada] bg-white"><svg width="9" height="5" viewBox="0 0 9 5" fill="#555"><path d="M0 0h9L4.500 5z" /></svg></div>
            </div>
          </div>
        </div>
      </div>
      <StatusBar />
      <Taskbar />
      <ExportDialog />
    </div>
  );
}
